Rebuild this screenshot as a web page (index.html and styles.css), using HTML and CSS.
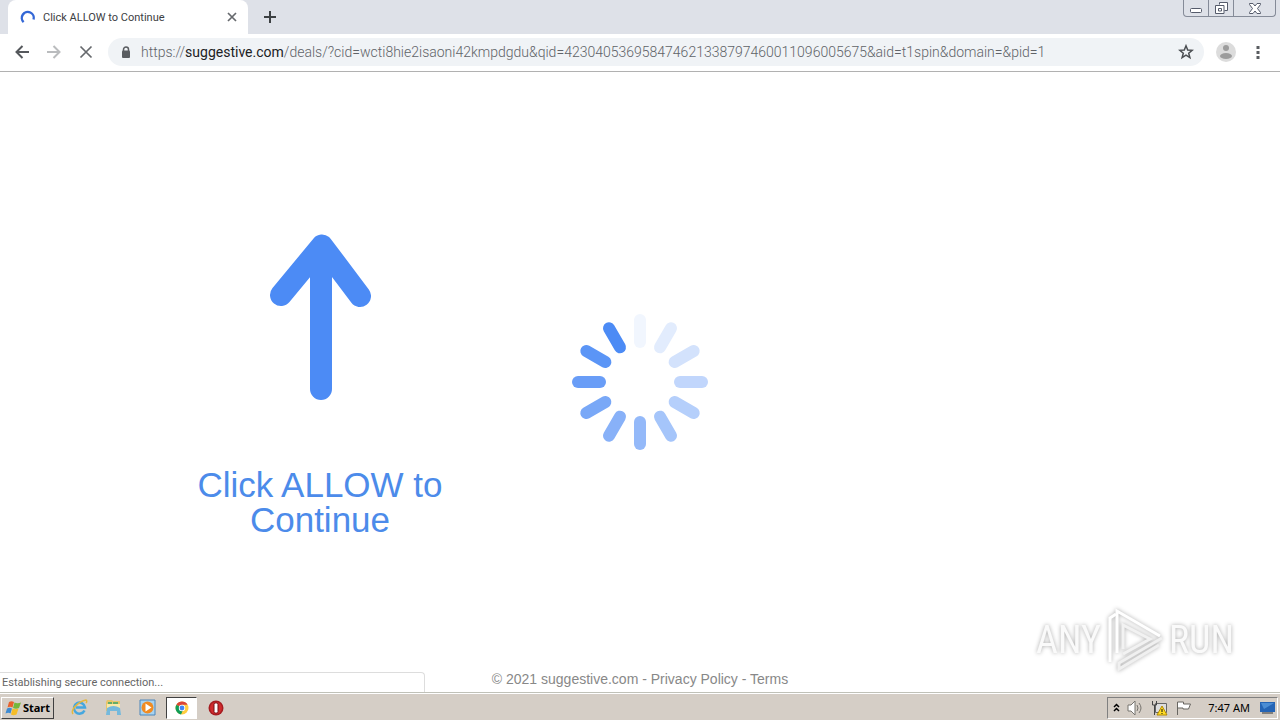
FILE: index.html
```
<!DOCTYPE html>
<html lang="en">
  <head>
    <meta charset="UTF-8" />
    <meta name="viewport" content="width=device-width, initial-scale=1" />
    <title>Click ALLOW to Continue</title>
    <link rel="stylesheet" href="styles.css">
  </head>
  <body>
    <header class="browser">
      <div class="tab-bar">
        <div class="tab">
          <svg class="tab-spinner" width="16" height="16" viewBox="0 0 16 16"><path d="M3.600 13.200A6 6 0 1 1 13.600 10.500" fill="none" stroke="#3367d6" stroke-width="2.400" /></svg>
          <span class="tab-title">Click ALLOW to Continue</span>
          <button class="icon-button tab-close" aria-label="Close tab">
            <svg width="10" height="10" viewBox="0 0 10 10"><path d="M1 1l8 8M9 1L1 9" stroke="#66696d" stroke-width="1.700" /></svg>
          </button>
        </div>
        <button class="icon-button new-tab" aria-label="New tab">
          <svg width="12" height="12" viewBox="0 0 12 12"><path d="M6 0v12M0 6h12" stroke="#3c4043" stroke-width="2" /></svg>
        </button>
        <div class="window-controls">
          <button aria-label="Minimize">
            <svg width="12" height="14" viewBox="0 0 12 14"><rect x=".5" y="7.500" width="11" height="4" rx="1" fill="#fff" stroke="#555b6b" /></svg>
          </button>
          <button aria-label="Restore">
            <svg width="13" height="14" viewBox="0 0 13 14"><path d="M4.500 3.500v-2h8v8h-3M.5 4.500h8.500v8H.5zM3.500 7.500h3v2.500h-3z" fill="#fff" stroke="#555b6b" /></svg>
          </button>
          <button class="close" aria-label="Close">
            <svg width="12" height="14" viewBox="0 0 12 14"><path d="M.5 2.500h3.500L6 5l2-2.500h3.500v1L8.500 7.500l3 4v1H8L6 10l-2 2.500H.5v-1l3-4-3-4z" fill="#fff" stroke="#555b6b" /></svg>
          </button>
        </div>
      </div>
      <div class="toolbar">
        <button class="icon-button" aria-label="Back">
          <svg width="14" height="14" viewBox="0 0 14 14"><path d="M14 7H1.500M7.500 1l-6 6 6 6" fill="none" stroke="#55585c" stroke-width="2" /></svg>
        </button>
        <button class="icon-button" aria-label="Forward">
          <svg width="14" height="14" viewBox="0 0 14 14"><path d="M0 7h12.500M6.500 1l6 6-6 6" fill="none" stroke="#babcbe" stroke-width="2" /></svg>
        </button>
        <button class="icon-button" aria-label="Stop loading">
          <svg width="14" height="14" viewBox="0 0 14 14"><path d="M1.500 1.500l11 11M12.500 1.500l-11 11" stroke="#66696d" stroke-width="1.700" /></svg>
        </button>
        <div class="address-bar">
          <svg width="10" height="13" viewBox="0 0 10 13"><path d="M2.500 5V3.500a2.500 2.500 0 0 1 5 0V5" fill="none" stroke="#5a5d61" stroke-width="1.500" /><rect x="1" y="4.500" width="8" height="7.500" rx="1" fill="#5a5d61" /></svg>
          <span class="url">https://<b>suggestive.com</b>/deals/?cid=wcti8hie2isaoni42kmpdgdu&amp;qid=423040536958474621338797460011096005675&amp;aid=t1spin&amp;domain=&amp;pid=1</span>
          <button class="icon-button" aria-label="Bookmark this page">
            <svg width="16" height="16" viewBox="0 0 16 16"><path d="M8 1.800l1.700 4.200 4.500.3-3.500 2.900 1.200 4.400L8 11.200l-3.900 2.400 1.200-4.400-3.500-2.900 4.500-.3z" fill="none" stroke="#4b4e52" stroke-width="1.500" /></svg>
          </button>
        </div>
        <button class="icon-button avatar" aria-label="Profile">
          <svg width="20" height="20" viewBox="0 0 20 20"><circle cx="10" cy="10" r="10" fill="#dcdcdc" /><circle cx="10" cy="6" r="3" fill="#9c9c9c" /><ellipse cx="10" cy="14" rx="6" ry="3" fill="#9c9c9c" /></svg>
        </button>
        <button class="icon-button menu" aria-label="Menu">
          <svg width="4" height="14" viewBox="0 0 4 14"><path d="M.5 1h3v3h-3zM.5 6h3v3h-3zM.5 11h3v3h-3z" fill="#5a5d61" /></svg>
        </button>
      </div>
    </header>

    <main class="page">
      <div class="content">
        <section class="prompt">
          <svg width="102" height="168" viewBox="0 0 102 168"><path d="M52 20V155M12 61L53 11.500L91 62M52 14V30" fill="none" stroke="#4c8bf5" stroke-width="22" stroke-linecap="round" stroke-linejoin="round" /></svg>
          <p>Click ALLOW to Continue</p>
        </section>
        <section class="loader">
          <svg width="136" height="136" viewBox="-68 -68 136 136">
            <defs><rect id="bar" x="-6" y="-68" width="12" height="34" rx="6" /></defs>
            <use href="#bar" fill="#f1f6fe" />
            <use href="#bar" transform="rotate(30)" fill="#e2ecfd" />
            <use href="#bar" transform="rotate(60)" fill="#d3e2fc" />
            <use href="#bar" transform="rotate(90)" fill="#c1d6fc" />
            <use href="#bar" transform="rotate(120)" fill="#b5cffb" />
            <use href="#bar" transform="rotate(150)" fill="#a5c5fa" />
            <use href="#bar" transform="rotate(180)" fill="#94b9f9" />
            <use href="#bar" transform="rotate(210)" fill="#88b1f8" />
            <use href="#bar" transform="rotate(240)" fill="#79a8f7" />
            <use href="#bar" transform="rotate(270)" fill="#699df7" />
            <use href="#bar" transform="rotate(300)" fill="#5b95f6" />
            <use href="#bar" transform="rotate(330)" fill="#4c8bf5" />
          </svg>
        </section>
      </div>
      <footer class="page-footer">&copy; 2021 suggestive.com - <a href="#">Privacy Policy</a> - <a href="#">Terms</a></footer>
      <div class="status">Establishing secure connection...</div>
      <div class="watermark">
        <span>ANY</span>
        <svg width="60" height="64" viewBox="0 0 60 64" fill="none" stroke-width="3">
          <path d="M5 54V10l6-4" stroke="#fff" />
          <path d="M12 45V3l43 25" stroke="#fff" />
          <path d="M18 41V17l27 14-27 15" stroke="#f2f2f2" />
          <path d="M57 30L14 55v6l40-24" stroke="#f0f0f0" />
        </svg>
        <span>RUN</span>
      </div>
    </main>

    <nav class="taskbar">
      <button class="start">
        <svg width="17" height="16" viewBox="0 0 17 16"><path d="M4 2c2-1 3-1 5 0L7.500 7.500C6 6.500 4 6.500 2.500 7.500z" fill="#e8622c" /><path d="M9.500 2.500c2 1 4 1 6.500 0l-2 5.500c-2 1-4 1-6 0z" fill="#75b73b" /><path d="M2 8.500c2-1 3-1 5 0l-1.500 5c-1-1-3-1-5 0z" fill="#3e8bd2" /><path d="M7.500 8.500c2 1 4 1 6 0l-2 6c-2 1-4 1-5.500 0z" fill="#f5bd28" /></svg>
        Start
      </button>
      <button class="task" aria-label="Internet Explorer">
        <svg width="17" height="17" viewBox="0 0 17 17"><path d="M13.500 11.500a5.500 5.500 0 1 1 .5-3H5" fill="none" stroke="#45a7df" stroke-width="2.500" /><path d="M2 15C-1 11 8 2 15 1c1 0 1 2 0 3" fill="none" stroke="#e5b83d" stroke-width="1.500" /></svg>
      </button>
      <button class="task" aria-label="Windows Explorer">
        <svg width="17" height="17" viewBox="0 0 17 17"><path d="M1 3l1-2h5l1 1h7v10H1z" fill="#e8c56a" /><path d="M2 5h13v6H2z" fill="#f8e9a8" /><path d="M3 4h4M8 4h5" stroke="#65ad68" stroke-width="2" /><path d="M2 9q6.500-4 13 0l1 7h-4v-4H5v4H1z" fill="#75b9dc" /></svg>
      </button>
      <button class="task" aria-label="Media Player">
        <svg width="17" height="17" viewBox="0 0 17 17"><path d="M1 1h15v15H1z" fill="#a8d3f0" stroke="#4c86bb" /><circle cx="8.500" cy="8.500" r="6" fill="#f18b22" /><path d="M6.500 4.500l6 4-6 4z" fill="#fff" /></svg>
      </button>
      <button class="task active" aria-label="Chrome">
        <svg width="14" height="14" viewBox="0 0 14 14"><circle cx="7" cy="7" r="6.500" fill="#ffcd40" /><path d="M7 7L1.400 3.700A6.500 6.500 0 0 1 12.600 3.700H7z" fill="#db4437" /><path d="M1.400 3.700L7 7l1 2-2 4.400A6.500 6.500 0 0 1 1.400 3.700z" fill="#0f9d58" /><circle cx="7" cy="7" r="3.200" fill="#fff" /><circle cx="7" cy="7" r="2.400" fill="#4285f4" /></svg>
      </button>
      <button class="task" aria-label="Opera">
        <svg width="16" height="16" viewBox="0 0 16 16"><circle cx="8" cy="8" r="7.500" fill="#a61c20" /><circle cx="8" cy="8" r="6" fill="#d02b2d" /><rect x="6" y="3" width="4" height="10" rx="1.500" fill="#fff" stroke="#751015" /></svg>
      </button>
      <div class="tray">
        <button class="icon-button" aria-label="Show hidden icons"><svg width="7" height="10" viewBox="0 0 7 10"><path d="M1 4l2.500-2.500L6 4M1 8l2.500-2.500L6 8" fill="none" stroke="#000" stroke-width="1.500" /></svg></button>
        <button class="icon-button" aria-label="Volume"><svg width="17" height="16" viewBox="0 0 17 16"><path d="M1 5h3l4-4v14l-4-4H1z" fill="#fff" stroke="#77746f" /><path d="M10 5q2 3 0 6M12 3q4 5 0 10" fill="none" stroke="#77746f" /></svg></button>
        <button class="icon-button" aria-label="Network"><svg width="17" height="16" viewBox="0 0 17 16"><path d="M4.500 3.500h11v9h-11z" fill="#ddd" stroke="#666" /><path d="M1.500 1v4h4V1M3.500 5v10" fill="none" stroke="#444" /><path d="M11 6l5 9H6z" fill="#ffdc25" stroke="#b48a00" /><path d="M11 9v3M11 13v1" stroke="#111" /></svg></button>
        <button class="icon-button" aria-label="Action Center"><svg width="17" height="16" viewBox="0 0 17 16"><path d="M2.500 15V2h6v2h7l-2 5H8V8H3" fill="#fff" stroke="#686661" /></svg></button>
        <time>7:47 AM</time>
        <button class="icon-button" aria-label="Show desktop"><svg width="16" height="13" viewBox="0 0 16 13"><path d="M0 1h15v10H0z" fill="#2464b5" /><path d="M1 2h13L4 8z" fill="#4b8dd4" /><path d="M2 12h11" stroke="#333" /></svg></button>
      </div>
    </nav>
  </body>
</html>
```
FILE: styles.css
```
* {
  box-sizing: border-box;
}
body {
  display: flex;
  flex-direction: column;
  height: 100vh;
  margin: 0;
  font-family: "Liberation Sans", Arial, sans-serif;
  background: #fff;
}
button {
  display: flex;
  align-items: center;
  justify-content: center;
  padding: 0;
  border: 0;
  background: none;
  color: #000;
}
svg {
  display: block;
  flex: none;
}
a {
  color: inherit;
  text-decoration: none;
}
.tab-bar {
  display: flex;
  height: 34px;
  padding-left: 8px;
  background: #dee1e8;
}
.tab {
  display: flex;
  align-items: center;
  width: 240px;
  padding: 0 10px 0 12px;
  border-radius: 8px 8px 0 0;
  background: #fff;
}
.tab-title {
  flex: 1;
  margin-left: 7px;
  font: 11px Roboto, sans-serif;
  color: #3c4043;
}
.tab-close,
.new-tab {
  width: 12px;
}
.new-tab {
  margin-left: 16px;
}
.window-controls {
  display: flex;
  height: 17px;
  margin: 0 4px 0 auto;
  border: 1px solid #858b98;
  border-top: 0;
  border-radius: 0 0 4px 4px;
}
.window-controls button {
  width: 25px;
  border-right: 1px solid #858b98;
}
.window-controls .close {
  width: 41px;
  border: 0;
}
.toolbar {
  display: flex;
  align-items: center;
  height: 38px;
  padding: 0 20px 1px 15px;
  border-bottom: 1px solid #b1b1b1;
}
.toolbar > .icon-button {
  width: 14px;
  margin-right: 18px;
}
.address-bar {
  display: flex;
  align-items: center;
  flex: 1;
  min-width: 0;
  height: 28px;
  margin-left: -3px;
  padding: 0 10px 0 13px;
  border-radius: 14px;
  background: #f0f3f6;
}
.url {
  flex: 1;
  margin-left: 10px;
  overflow: hidden;
  font: 300 14px Roboto, sans-serif;
  white-space: nowrap;
  color: #5f6368;
}
.url b {
  font-weight: 400;
  color: #202124;
}
.toolbar .avatar {
  width: 20px;
  margin: 0 20px 0 12px;
}
.toolbar .menu {
  width: 4px;
  margin: 0;
}
.page {
  position: relative;
  display: flex;
  flex-direction: column;
  flex: 1;
}
.content {
  display: grid;
  grid-template-columns: 1fr 1fr 1fr;
  align-items: center;
  flex: 1;
  padding: 20px 12.5% 0;
}
.prompt,
.loader {
  display: flex;
  flex-direction: column;
  align-items: center;
}
.prompt {
  padding-top: 8px;
}
.prompt p {
  width: 260px;
  margin: 65px 0 0;
  font-size: 35px;
  line-height: 35px;
  text-align: center;
  color: #4c8bea;
}
.page-footer {
  padding-bottom: 5px;
  font-size: 14px;
  line-height: 16px;
  text-align: center;
  color: #888;
}
.status {
  position: absolute;
  bottom: 0;
  left: 0;
  width: 425px;
  height: 20px;
  padding-left: 2px;
  border: 1px solid #ddd;
  border-width: 1px 1px 0 0;
  border-radius: 0 4px 0 0;
  font: 11px/20px Roboto, sans-serif;
  color: #666;
  background: #fff;
}
/* overlaid on the page corner */
.watermark {
  position: absolute;
  right: 46px;
  bottom: 20px;
  display: flex;
  align-items: center;
  gap: 4px;
  font: 38px "Liberation Sans Narrow", "Roboto Condensed", "Liberation Sans", sans-serif;
  color: #fafafa;
  filter: drop-shadow(0 0 2px #aaa);
}
.taskbar {
  display: flex;
  align-items: center;
  height: 28px;
  padding: 2px 2px 0 1px;
  border-top: 1px solid #c0c1b8;
  background: #d5cec6;
  box-shadow: inset 0 1px #fff;
}
.start {
  gap: 1px;
  width: 53px;
  height: 22px;
  margin-right: 10px;
  border: 1px solid;
  border-color: #fff #404040 #404040 #fff;
  font: bold 11px "Noto Sans", sans-serif;
}
.task {
  width: 31px;
  height: 22px;
  margin-right: 3px;
}
.task.active {
  border: 1px solid;
  border-color: #404040 #fff #fff #404040;
  background: #fff;
}
.tray {
  display: flex;
  align-items: center;
  gap: 7px;
  height: 22px;
  margin-left: auto;
  padding: 0 1px 0 5px;
  border: 1px solid;
  border-color: #808080 #fff #fff #808080;
}
.tray time {
  margin: 0 3px 0 9px;
  font: 11px "Noto Sans", sans-serif;
}
```
